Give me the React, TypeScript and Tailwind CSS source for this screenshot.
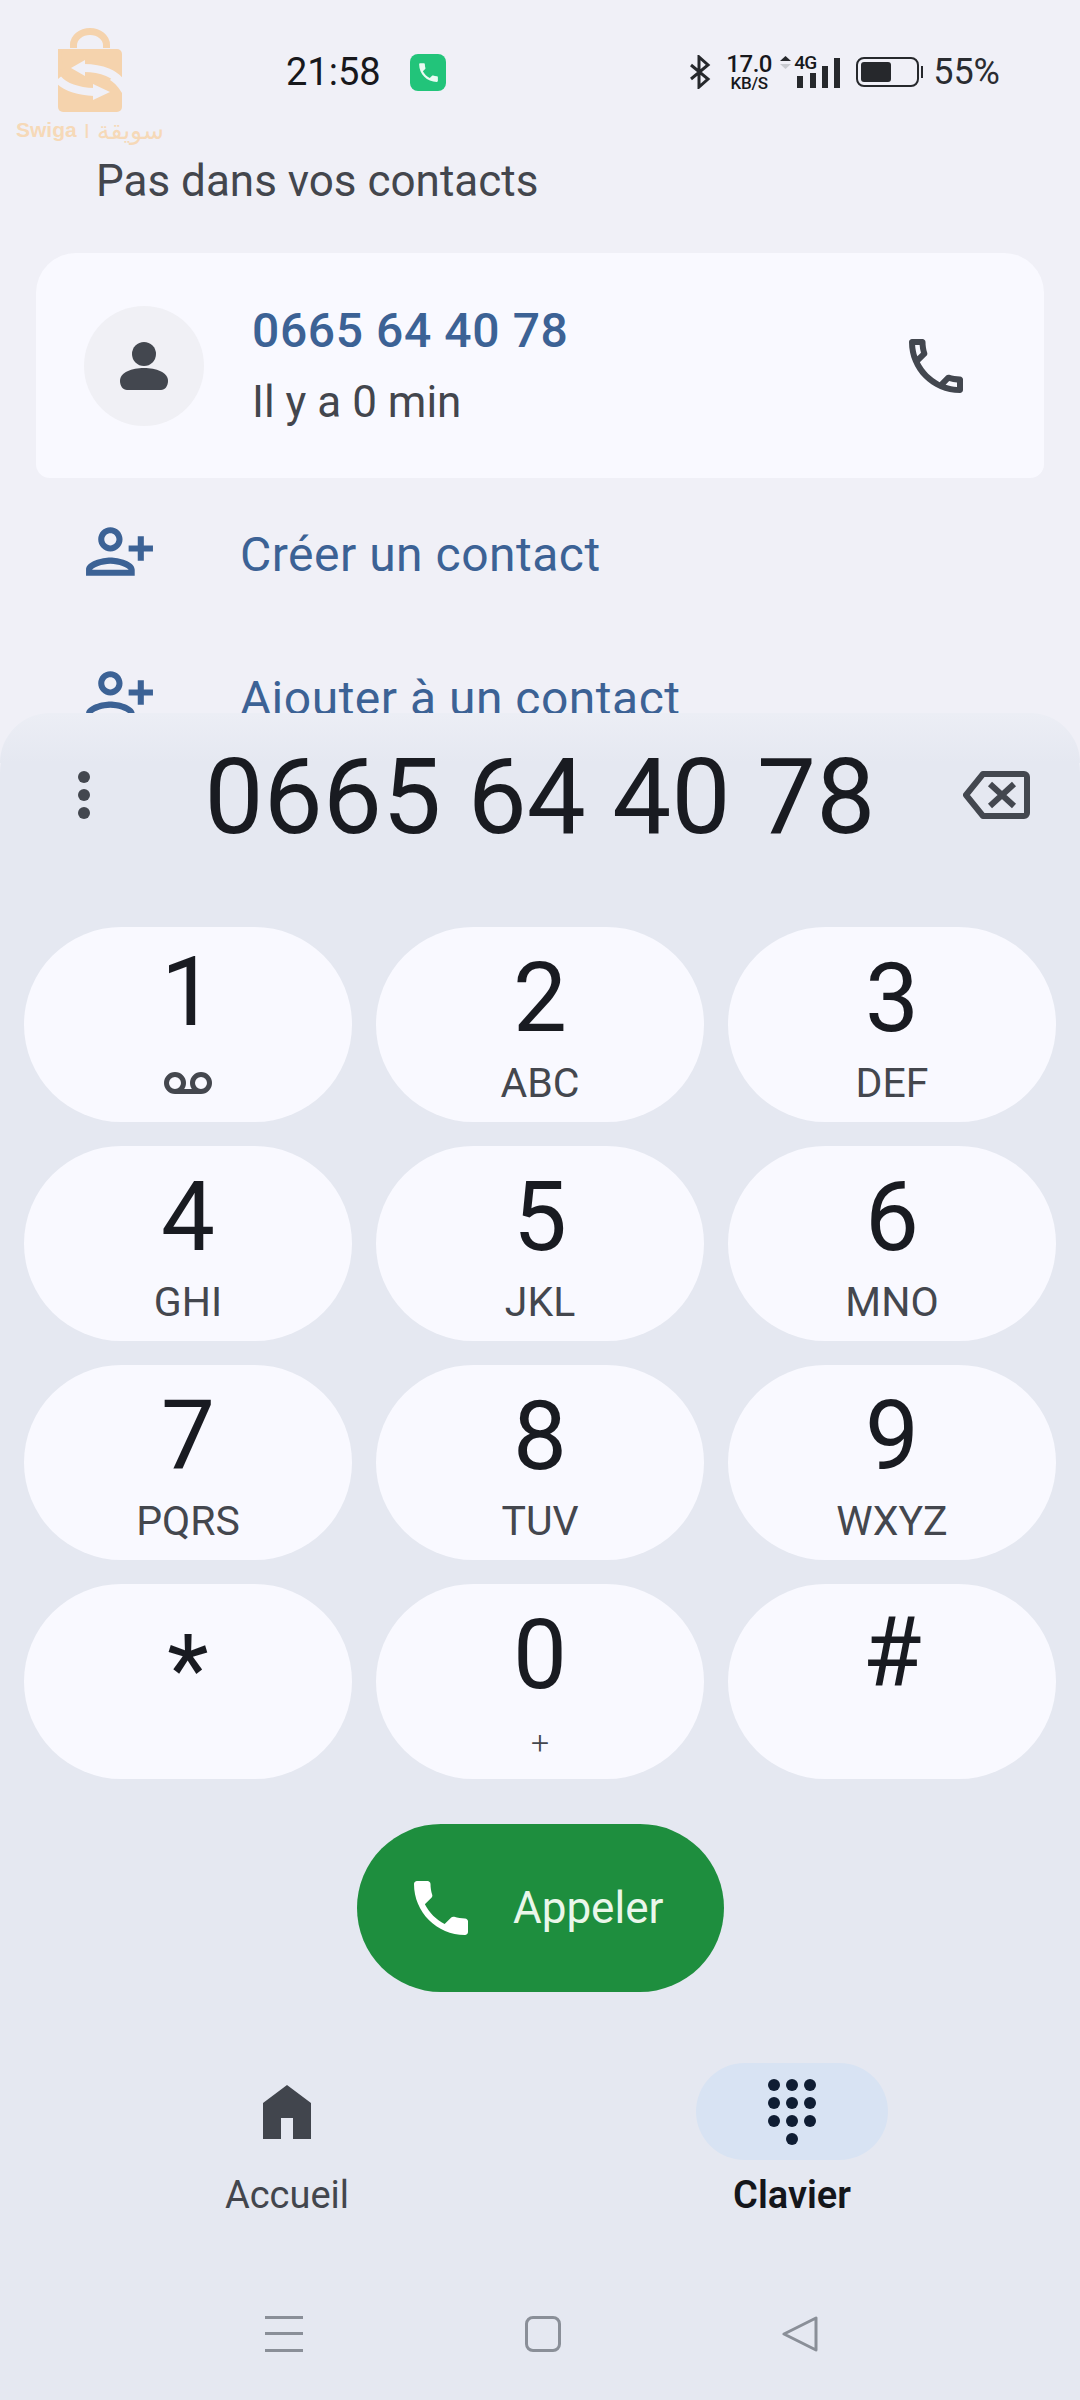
import React from 'react';

const FONT = "font-['Roboto',sans-serif]";

const PHONE_OUTLINE = "M6.54 5c.06.89.21 1.76.45 2.59l-1.2 1.2c-.41-1.2-.67-2.47-.76-3.79h1.51m9.86 12.02c.85.24 1.72.39 2.6.45v1.49c-1.32-.09-2.59-.35-3.8-.75l1.2-1.19M7.5 3H4c-.55 0-1 .45-1 1 0 9.39 7.61 17 17 17 .55 0 1-.45 1-1v-3.49c0-.55-.45-1-1-1-1.24 0-2.45-.2-3.57-.57-.1-.04-.21-.05-.31-.05-.26 0-.51.1-.71.29l-2.2 2.2c-2.83-1.45-5.15-3.76-6.59-6.59l2.2-2.2c.28-.28.36-.67.25-1.02C8.7 6.45 8.5 5.25 8.5 4c0-.55-.45-1-1-1z";
const PHONE_FILLED = "M20 15.5c-1.25 0-2.45-.2-3.57-.57-.35-.11-.74-.03-1.02.24l-2.2 2.2c-2.83-1.44-5.15-3.75-6.59-6.58l2.2-2.21c.28-.27.36-.66.25-1.01C8.7 6.45 8.5 5.25 8.5 4c0-.55-.45-1-1-1H4c-.55 0-1 .45-1 1 0 9.39 7.61 17 17 17 .55 0 1-.45 1-1v-3.5c0-.55-.45-1-1-1z";
const PERSON_ADD = "M15 12c2.21 0 4-1.79 4-4s-1.79-4-4-4-4 1.79-4 4 1.79 4 4 4zm0-6c1.1 0 2 .9 2 2s-.9 2-2 2-2-.9-2-2 .9-2 2-2zm0 8c-2.67 0-8 1.34-8 4v2h16v-2c0-2.66-5.33-4-8-4zm-6 4c.22-.72 3.31-2 6-2 2.7 0 5.8 1.29 6 2H9zm-3-3v-3h3v-2H6V7H4v3H1v2h3v3h2z";

const keys = [
  { d: '1', sub: 'voicemail', shift: '-translate-y-[6px]' },
  { d: '2', sub: 'ABC', shift: '' },
  { d: '3', sub: 'DEF', shift: '' },
  { d: '4', sub: 'GHI', shift: '' },
  { d: '5', sub: 'JKL', shift: '' },
  { d: '6', sub: 'MNO', shift: '' },
  { d: '7', sub: 'PQRS', shift: '' },
  { d: '8', sub: 'TUV', shift: '' },
  { d: '9', sub: 'WXYZ', shift: '' },
  { d: '*', sub: '', shift: 'translate-y-[15px]' },
  { d: '0', sub: '+', shift: '' },
  { d: '#', sub: '', shift: '-translate-y-[3px]' },
];

function Logo() {
  // watermark sitting over the status bar
  return (
    <div className="absolute left-[16px] top-[28px] flex w-[148px] flex-col items-center">
      <svg width="64" height="84" viewBox="0 0 64 84">
        <path d="M15.500 20v-3a16.500 13.500 0 0 1 33 0v3" fill="none" stroke="#f5d3ad" strokeWidth="7" />
        <rect x="0" y="21" width="64" height="63" rx="5" fill="#f5d3ad" />
        {/* swap arrows are cut out of the bag */}
        <path d="M64 56C58 46 44 40 26 40" fill="none" stroke="#f0f0f7" strokeWidth="8" />
        <path d="M13 40l14-8v16z" fill="#f0f0f7" />
        <path d="M0 51c6 7 18 12 36 13" fill="none" stroke="#f0f0f7" strokeWidth="8" />
        <path d="M52 64l-17-8v16z" fill="#f0f0f7" />
        <path d="M0 21h5C2 27 3 34 8 40L0 43z" fill="#f5d3ad" />
        <path d="M64 56v9c-3-5-6-9-12-13l5-6c3 3 5 6 7 10z" fill="#f0f0f7" />
      </svg>
      <div className="mt-[5px] flex w-full items-center justify-between whitespace-nowrap font-['Liberation_Sans','DejaVu_Sans',sans-serif] leading-[26px] text-[#f6d9b8]">
        <span className="text-[21px] font-bold">Swiga</span>
        <span className="text-[15px] font-bold">|</span>
        <span className="text-[25px]">سويقة</span>
      </div>
    </div>
  );
}

function StatusBar() {
  return (
    <div className="flex h-[144px] items-center pl-[286px] pr-[80px] text-[#17181c]">
      <span className="w-[95px] text-[38px] leading-[40px]">21:58</span>
      <div className="ml-[29px] flex h-[37px] w-[36px] items-center justify-center rounded-[8px] bg-[#22c47a]">
        <svg width="25" height="25" viewBox="0 0 24 24" fill="#e9fbf2"><path d={PHONE_FILLED} /></svg>
      </div>
      <div className="ml-auto flex items-center">
        <svg width="22" height="34" viewBox="0 0 22 34" fill="none" stroke="#26282c" strokeWidth="3">
          <path d="M2 10l17 14-9 8V2l9 8L2 24" />
        </svg>
        <div className="ml-[17px] flex w-[42px] flex-col items-center font-medium">
          <span className="text-[24px] leading-[22px] tracking-[-0.5px]">17.0</span>
          <span className="text-[17px] leading-[16px] tracking-[-0.3px]">KB/S</span>
        </div>
        <div className="relative ml-[10px] h-[34px] w-[60px]">
          <svg width="60" height="34" viewBox="0 0 60 34" fill="#26282c">
            <path d="M0 6l5.500-5 5.500 5z" />
            <path d="M0 9l5.500 5 5.500-5z" fill="#c9cbd1" />
            <rect x="17" y="21" width="6" height="12" />
            <rect x="30" y="18" width="6" height="15" />
            <rect x="42" y="11" width="6" height="22" />
            <rect x="54" y="3" width="6" height="30" />
          </svg>
          <span className="absolute left-[14px] top-[-1px] bg-[#f0f0f7] pr-[1px] text-[19px] font-medium leading-[18px] tracking-[-0.8px]">4G</span>
        </div>
        <div className="ml-[16px] flex h-[30px] w-[63px] items-center rounded-[8px] border-[2px] border-[#26282c] p-[3px]">
          <div className="h-full w-[30px] rounded-[3px] bg-[#26282c]" />
        </div>
        <div className="ml-[2px] h-[12px] w-[2px] bg-[#26282c]" />
        <span className="ml-[10px] text-[36px] leading-[40px] text-[#2a2c31]">55%</span>
      </div>
    </div>
  );
}

function ContactRow({ label }: { label: string }) {
  return (
    <div className="flex h-[144px] items-center pl-[83px]">
      <svg width="73" height="73" viewBox="0 0 24 24" fill="#3c6295" className="-scale-x-100">
        <path d={PERSON_ADD} />
      </svg>
      <span className="ml-[84px] mt-[8px] text-[48px] leading-[56px] tracking-[0.5px] text-[#3c6295]">{label}</span>
    </div>
  );
}

function Key({ d, sub, shift }: { d: string; sub: string; shift: string }) {
  return (
    <div className="flex h-[195px] flex-col items-center rounded-full bg-[#f9f9ff] pt-[35px]">
      <span className={`h-[72px] text-[96px] leading-[72px] text-[#191b21] ${shift}`}>{d}</span>
      <div className="mt-[29px] flex h-[40px] items-center justify-center text-[41px] leading-[40px] text-[#44474e]">
        {sub === 'voicemail' ? (
          <svg width="50" height="22" viewBox="0 0 50 22" fill="none" stroke="#44474e" strokeWidth="5">
            <circle cx="12" cy="11" r="8.500" />
            <circle cx="38" cy="11" r="8.500" />
            <path d="M12 19.500h26" />
          </svg>
        ) : sub === '+' ? (
          <span className="translate-y-[3px] text-[32px] font-light">+</span>
        ) : (
          sub
        )}
      </div>
    </div>
  );
}

function DialpadIcon() {
  const dots = [];
  for (let r = 0; r < 3; r++) {
    for (let c = 0; c < 3; c++) {
      dots.push(<ellipse key={`${r}-${c}`} cx={6 + c * 18} cy={6 + r * 18} rx="6" ry="6" />);
    }
  }
  return (
    <svg width="48" height="66" viewBox="0 0 48 66" fill="#0f1d33">
      {dots}
      <ellipse cx="24" cy="60" rx="6" ry="6" />
    </svg>
  );
}

export default function App() {
  return (
    <div className={`${FONT} relative h-[2400px] w-[1080px] overflow-hidden bg-[#f0f0f7]`}>
      <div className="h-[713px] overflow-hidden">
        <StatusBar />
        <Logo />
        <div className="flex h-[74px] items-center pl-[96px] text-[44px] leading-[52px] text-[#43464d]">
          Pas dans vos contacts
        </div>

        {/* recent call card */}
        <div className="mx-[36px] mt-[35px] flex h-[225px] items-center rounded-t-[40px] rounded-b-[14px] bg-[#f9f9ff] pl-[48px] pr-[72px]">
          <div className="flex h-[120px] w-[120px] items-center justify-center rounded-full bg-[#f0f0f5]">
            <svg width="48" height="48" viewBox="0 0 48 48" fill="#43474f">
              <ellipse cx="24" cy="12" rx="12" ry="12" />
              <path d="M0 39c0-9 12-13 24-13s24 4 24 13c0 5-3 9-7 9H7c-4 0-7-4-7-9z" />
            </svg>
          </div>
          <div className="ml-[48px] flex flex-col">
            <span className="text-[48px] font-medium leading-[56px] tracking-[0.6px] text-[#3c6295]">0665 64 40 78</span>
            <span className="mt-[17px] text-[44px] leading-[52px] text-[#43464d]">Il y a 0 min</span>
          </div>
          <svg width="72" height="72" viewBox="0 0 24 24" fill="#43474f" className="ml-auto">
            <path d={PHONE_OUTLINE} />
          </svg>
        </div>

        <div className="pt-[1px]">
          <ContactRow label="Créer un contact" />
          <ContactRow label="Ajouter à un contact" />
        </div>
      </div>

      {/* dialer sheet, overlaps the list above */}
      <div className="absolute inset-x-0 top-[713px] bottom-0 rounded-t-[60px] bg-[#e5e8f1]">
        <div className="absolute inset-x-0 top-0 h-[50px] rounded-t-[60px] bg-linear-to-b from-[#eceef5] to-[#e5e8f1]" />
        <div className="relative grid h-[164px] grid-cols-[1fr_auto_1fr] items-center">
          <div className="flex flex-col gap-[6px] pl-[78px]">
            <div className="h-[12px] w-[12px] rounded-full bg-[#43474f]" />
            <div className="h-[12px] w-[12px] rounded-full bg-[#43474f]" />
            <div className="h-[12px] w-[12px] rounded-full bg-[#43474f]" />
          </div>
          <span className="mt-[6px] text-[105px] leading-[120px] tracking-[0.2px] text-[#191b21]">0665 64 40 78</span>
          <div className="flex justify-end pr-[50px]">
            <svg width="67" height="48" viewBox="0 0 67 48" fill="none" stroke="#43474f" strokeWidth="6" strokeLinejoin="round">
              <path d="M20 3h41a3 3 0 0 1 3 3v36a3 3 0 0 1-3 3H20L3 24z" />
              <path d="M27 13l24 22M51 13L27 35" />
            </svg>
          </div>
        </div>

        <div className="mt-[50px] grid grid-cols-3 gap-[24px] px-[24px]">
          {keys.map((k) => (
            <Key key={k.d} d={k.d} sub={k.sub} shift={k.shift} />
          ))}
        </div>

        <div className="ml-[357px] mt-[45px] flex h-[168px] w-[367px] items-center rounded-full bg-[#1e8e3e] pl-[48px]">
          <svg width="72" height="72" viewBox="0 0 24 24" fill="#ffffff">
            <path d={PHONE_FILLED} />
          </svg>
          <span className="ml-[36px] text-[44px] leading-[52px] text-[#eaf7ea]">Appeler</span>
        </div>

        <div className="mt-[71px] flex gap-[313px] pl-[191px]">
          <div className="flex w-[192px] flex-col items-center">
            <div className="flex h-[97px] w-full items-center justify-center">
              <svg width="48" height="54" viewBox="0 0 48 54" fill="#41454d">
                <path d="M24 0l24 18v36H30V33H18v21H0V18z" />
              </svg>
            </div>
            <span className="mt-[11px] text-[38px] leading-[48px] text-[#43464d]">Accueil</span>
          </div>
          <div className="flex w-[192px] flex-col items-center">
            <div className="flex h-[97px] w-full items-center justify-center rounded-full bg-[#d8e3f3]">
              <DialpadIcon />
            </div>
            <span className="mt-[11px] text-[38px] font-semibold leading-[48px] text-[#14161b]">Clavier</span>
          </div>
        </div>

        <div className="mt-[97px] flex items-center justify-between pl-[265px] pr-[262px]">
          <svg width="38" height="36" viewBox="0 0 38 36" fill="#8a8f98">
            <rect x="0" y="0" width="38" height="3" />
            <rect x="0" y="16" width="38" height="3" />
            <rect x="0" y="33" width="38" height="3" />
          </svg>
          <div className="h-[36px] w-[36px] rounded-[8px] border-[3px] border-[#8a8f98]" />
          <svg width="36" height="36" viewBox="0 0 36 36" fill="none" stroke="#8a8f98" strokeWidth="3" strokeLinejoin="round">
            <path d="M34 2v32L2 18z" />
          </svg>
        </div>
      </div>
    </div>
  );
}
